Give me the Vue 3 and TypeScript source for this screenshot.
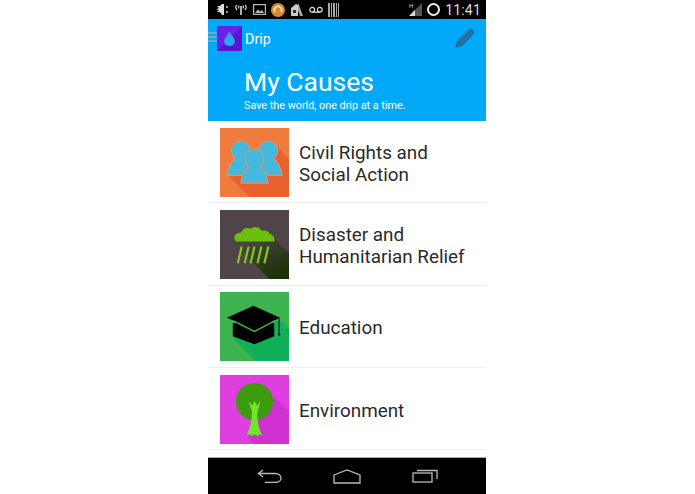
<template>
  <div class="page">
    <div class="phone">
      <div class="status-bar">
        <div class="status-left">
          <!-- bug -->
          <svg width="14" height="13" viewBox="0 0 14 13"><path d="M7 1 L9 1 L9 12 L7 12 L5 9 L2 9 L4 7 L1 6.500 L4 5 L2 3 L5 3Z" fill="#ddd" /><circle cx="12" cy="4" r="0.9" fill="#ddd" /><circle cx="12" cy="9" r="0.9" fill="#ddd" /></svg>
          <!-- antenna -->
          <svg width="14" height="12" viewBox="0 0 14 12" fill="none" stroke="#ddd" stroke-width="1.200"><path d="M3 1 Q0.500 3 3 6" /><path d="M11 1 Q13.500 3 11 6" /><path d="M7 2 V11" stroke-width="1.600" /><path d="M5 1.500 Q4 3 5 4.500 M9 1.500 Q10 3 9 4.500" /></svg>
          <!-- picture -->
          <svg width="13" height="11" viewBox="0 0 13 11"><rect x="0.600" y="0.600" width="11.800" height="9.800" fill="none" stroke="#bbb" stroke-width="1.200" /><path d="M2 9 L5 5.500 L7 7.500 L9 6 L11 9Z" fill="#bbb" /></svg>
          <!-- orange app -->
          <svg width="14" height="14" viewBox="0 0 14 14"><circle cx="7" cy="7" r="7" fill="#d98a2b" /><path d="M4 9 A3.600 3.600 0 1 1 10 9" fill="none" stroke="#f3e3c8" stroke-width="1.600" /></svg>
          <!-- sim/lock -->
          <svg width="14" height="15" viewBox="0 0 14 15"><path d="M1 6 L6 2 L8 3 V14 H1Z" fill="#ccc" /><rect x="3" y="8" width="3" height="3" fill="#333" /><path d="M8 0.500 L13 14 H10 L8 8Z" fill="#aaa" /></svg>
          <!-- voicemail -->
          <svg width="14" height="8" viewBox="0 0 14 8" fill="none" stroke="#ddd" stroke-width="1.200"><circle cx="3.200" cy="3.800" r="2.400" /><circle cx="10.800" cy="3.800" r="2.400" /><path d="M3.200 6.200 H10.800" /></svg>
          <!-- barcode -->
          <svg width="11" height="14" viewBox="0 0 11 14" fill="#aaa"><rect x="0" width="2" height="14" /><rect x="3" width="1" height="14" /><rect x="5" width="2" height="14" /><rect x="8" width="1" height="14" /><rect x="10" width="1" height="14" /></svg>
        </div>
        <div class="status-right">
          <span class="signal">
            <svg width="13" height="13" viewBox="0 0 13 13"><path d="M13 0 V13 H0Z" fill="#555" /><path d="M6 7 V13 H0Z" fill="#ddd" /><text x="0" y="5" font-size="6" fill="#ddd" font-family="Roboto, sans-serif">H</text></svg>
          </span>
          <span class="ring"></span>
          <span class="clock">11:41</span>
        </div>
      </div>

      <header class="hero">
        <div class="action-bar">
          <div class="brand">
            <span class="burger"><i></i><i></i><i></i></span>
            <span class="logo">
              <svg width="25" height="25" viewBox="0 0 25 25"><path d="M25 0 V25 H0Z" fill="#5a14d6" /><path d="M12.500 5.500 C15 10 18 13 18 15.500 A5.600 5.600 0 0 1 7 15.500 C7 13 10 10 12.500 5.500Z" fill="#2aa6ee" /></svg>
            </span>
            <span class="brand-name">Drip</span>
          </div>
          <svg class="pencil" width="21" height="21" viewBox="0 0 21 21"><path d="M1 20 L3 13 L14 2 L19 7 L8 18Z" fill="#1e6f9f" /><path d="M15 1 Q16.500 0 18 1 L20 3 Q21 4.500 20 6 L19 7 L14 2Z" fill="#1e6f9f" /><path d="M5 13 L15 3 M7 15 L17 5" stroke="#03a9f9" stroke-width="0.500" /></svg>
        </div>
        <div class="hero-text">
          <h1>My Causes</h1>
          <p>Save the world, one drip at a time.</p>
        </div>
      </header>

      <ul class="causes">
        <li v-for="cause in causes" :key="cause.key" class="cause">
          <div class="thumb">
            <svg v-if="cause.key === 'civil'" width="69" height="69" viewBox="0 0 70 70">
              <rect width="70" height="70" fill="#ef7b3d" />
              <path d="M70 32 L54 15 L8 48 L30 70 H70Z" fill="#e9612c" />
              <g fill="#45b8de" stroke="#dc9468" stroke-width="1.200">
                <path d="M21 13 A9.500 9.500 0 0 1 30.500 22.500 C30.500 26 29 29 26.500 31 C30 34 33 40 34 48 H7 C8 40 12 34 15.500 31 C13 29 11.500 26 11.500 22.500 A9.500 9.500 0 0 1 21 13Z" />
                <path d="M49 13 A9.500 9.500 0 0 1 58.500 22.500 C58.500 26 57 29 54.500 31 C58 34 62 40 63 48 H36 C37 40 40 34 43.500 31 C41 29 39.500 26 39.500 22.500 A9.500 9.500 0 0 1 49 13Z" />
                <path d="M35 21 A9.500 9.500 0 0 1 44.500 30.500 C44.500 34 43 37 40.500 39 C44 41 48 48 49 56 H21 C22 48 26 41 29.500 39 C27 37 25.500 34 25.500 30.500 A9.500 9.500 0 0 1 35 21Z" />
              </g>
            </svg>
            <svg v-else-if="cause.key === 'disaster'" width="69" height="69" viewBox="0 0 70 70">
              <defs>
                <linearGradient id="rain-shadow" x1="0.200" y1="0.100" x2="0.800" y2="0.900">
                  <stop offset="0" stop-color="#4a4644" />
                  <stop offset="1" stop-color="#1c3208" />
                </linearGradient>
              </defs>
              <rect width="70" height="70" fill="#4f4549" />
              <path d="M54 28 L70 44 V70 H50 L15 35 L15 30Z" fill="url(#rain-shadow)" />
              <path d="M15 30 C13 26 17 23 21 23 C23 19 27 17 31 19 C35 16 40 17 42 21 C46 20 50 22 50 24 C54 25 56 28 55 32 H16Z" fill="#6cbf0e" />
              <g stroke="#7ecb1e" stroke-width="2.200"><path d="M18 54 L22 37" /><path d="M25 54 L29 37" /><path d="M31 54 L35 37" /><path d="M38 54 L42 37" /><path d="M45 54 L49 37" /></g>
            </svg>
            <svg v-else-if="cause.key === 'education'" width="69" height="69" viewBox="0 0 70 70">
              <rect width="70" height="70" fill="#3db34f" />
              <path d="M63 30 L70 38 V70 H36 L14 48 L16 28Z" fill="#0fb057" />
              <path d="M13 32 L35 25 L55 32 V45 L35 53 L13 45Z" fill="#000" />
              <path d="M7 26 L34 14 L61 26 L35 38Z" fill="#000" />
              <path d="M13 29 L35 40 L56 29" fill="none" stroke="#3db34f" stroke-width="1.500" />
              <path d="M60 27 V43" stroke="#111" stroke-width="1.200" />
              <circle cx="60" cy="43" r="1.200" fill="#111" />
            </svg>
            <svg v-else width="69" height="69" viewBox="0 0 70 70">
              <rect width="70" height="70" fill="#e03fe0" />
              <path d="M55 22 L70 37 V70 H34 L27 62 Z" fill="#d231d2" />
              <circle cx="35" cy="27" r="19" fill="#3e9b10" />
              <path d="M32.500 37 L29 27 L33 31 L35 26 L37 31 L41 27 L38 38 C37.500 45 38.500 53 43 61 L40 60 L38 62 L35 60 L32 62 L30 60 L27 61 C31 53 32.500 45 32.500 37Z" fill="#6ee62a" />
            </svg>
          </div>
          <span class="cause-name">
            <template v-for="(line, i) in cause.lines" :key="i"><br v-if="i > 0" />{{ line }}</template>
          </span>
        </li>
      </ul>

      <nav class="nav-bar">
        <svg width="25" height="14" viewBox="0 0 25 14" fill="none" stroke="#bbb" stroke-width="1.300"><path d="M1 4.500 H18 C26 4.500 26 13.500 18 13.500 H8" /><path d="M6 1 L1.500 4.500 L6 8" /></svg>
        <svg width="28" height="15" viewBox="0 0 28 15" fill="none" stroke="#bbb" stroke-width="1.300"><path d="M1 6 L14 1 L27 6 V14 H1Z" /></svg>
        <svg width="26" height="14" viewBox="0 0 26 14" fill="none" stroke="#bbb" stroke-width="1.300"><rect x="1" y="4" width="19" height="9" /><path d="M5 1.500 H25 V10" /></svg>
      </nav>
    </div>
  </div>
</template>

<script setup lang="ts">
interface Cause {
  key: string
  lines: string[]
}

const causes: Cause[] = [
  { key: 'civil', lines: ['Civil Rights and', 'Social Action'] },
  { key: 'disaster', lines: ['Disaster and', 'Humanitarian Relief'] },
  { key: 'education', lines: ['Education'] },
  { key: 'environment', lines: ['Environment'] },
]
</script>

<style>
html, body { margin: 0; background: #fff; }
</style>

<style scoped>
.page { display: flex; justify-content: center; width: 695px; height: 494px; padding-right: 1px; box-sizing: border-box; font-family: Roboto, "Liberation Sans", sans-serif; overflow: hidden; }
.phone { width: 278px; height: 494px; display: flex; flex-direction: column; background: #fff; }

.status-bar { height: 19px; flex: none; background: #000; display: flex; align-items: center; justify-content: space-between; padding: 0 5px 0 7px; }
.status-left { display: flex; align-items: center; gap: 5px; }
.status-right { display: flex; align-items: center; gap: 5px; }
.signal { display: flex; }
.ring { width: 9px; height: 9px; border: 2px solid #eee; border-radius: 50%; }
.clock { color: #ddd; font-size: 14px; letter-spacing: 0.2px; }

.hero { height: 102px; flex: none; background: #03a9f9; }
.action-bar { display: flex; justify-content: space-between; align-items: center; padding: 7px 11px 0 0; }
.brand { display: flex; align-items: center; position: relative; padding-left: 9px; }
.burger { position: absolute; left: 0; top: 6px; width: 10px; display: flex; flex-direction: column; gap: 2px; }
.burger i { display: block; height: 2px; background: #6fa8c8; }
.logo { display: flex; width: 25px; height: 25px; background: #6a22e8; border-radius: 2px; overflow: hidden; position: relative; }
.brand-name { margin-left: 3px; color: #fff; font-size: 14.300px; }
.pencil { display: block; }
.hero-text { padding: 15px 0 0 36px; color: #fff; }
.hero-text h1 { margin: 0; font-size: 26.500px; line-height: 32px; font-weight: 400; }
.hero-text p { margin: 1px 0 0; font-size: 10.800px; line-height: 14px; }

.causes { list-style: none; margin: 0; padding: 0; flex: 1; min-height: 0; overflow: hidden; }
.cause { height: 82.300px; box-sizing: border-box; display: flex; align-items: center; gap: 10px; padding: 1px 0 0 12px; border-bottom: 1px solid #eee; }
.thumb { width: 69px; height: 69px; flex: none; }
.thumb svg { display: block; }
.cause-name { font-size: 18.850px; line-height: 22px; color: #2a2a2a; padding-top: 3px; }

.nav-bar { height: 37px; flex: none; background: #000; display: flex; align-items: center; justify-content: center; gap: 51px; border-top: 1px solid #aaa; box-sizing: border-box; }
</style>
